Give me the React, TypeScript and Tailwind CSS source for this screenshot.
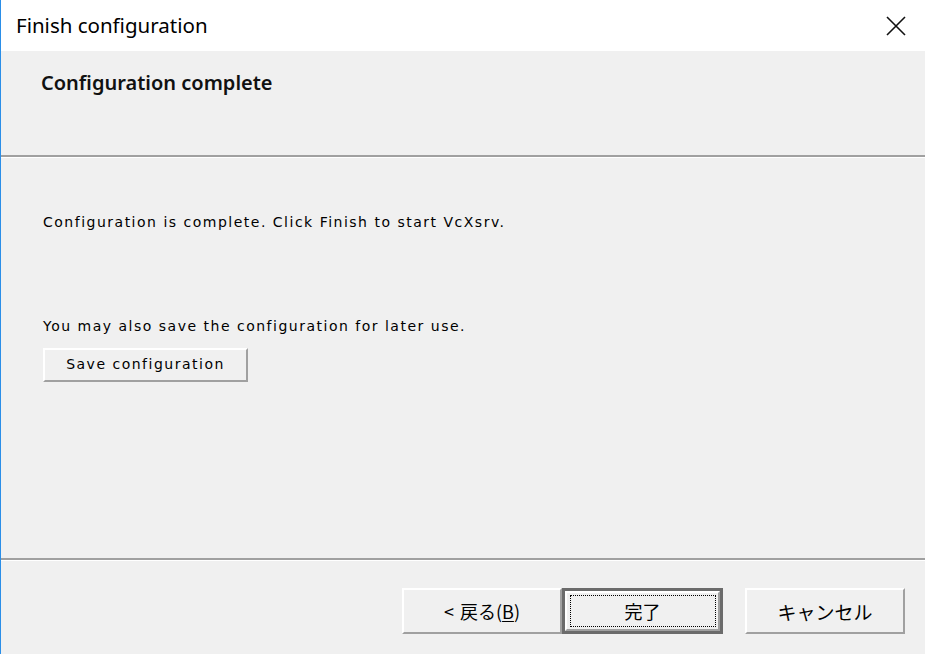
import React from 'react';

const Bevel: React.FC<{ className?: string; children: React.ReactNode }> = ({ className = '', children }) => (
  <div
    className={`flex items-center justify-center border-t-2 border-l-2 border-t-white border-l-white border-b-2 border-r-2 border-b-[#a0a0a0] border-r-[#a0a0a0] bg-[#f0f0f0] ${className}`}
  >
    {children}
  </div>
);

const App: React.FC = () => {
  return (
    <div className="flex h-[654px] w-[925px] flex-col overflow-hidden border-l border-[#2a8ee8] bg-[#f0f0f0] text-black">
      {/* Title bar */}
      <div className="flex h-[51px] shrink-0 items-center justify-between bg-white pl-[15px] pr-[18px]">
        <span className="font-['Noto_Sans',sans-serif] text-[20.5px] leading-none">Finish configuration</span>
        <svg width="22" height="22" viewBox="0 0 22 22" className="mt-px">
          <path d="M2 2 L20 20 M20 2 L2 20" stroke="#111" strokeWidth="1.6" fill="none" />
        </svg>
      </div>

      {/* Header */}
      <div className="flex h-[104px] shrink-0 items-start pl-[40px] pt-[20px]">
        <span className="font-['Noto_Sans',sans-serif] text-[20px] font-semibold leading-[24px] text-[#111]">
          Configuration complete
        </span>
      </div>
      <div className="h-[2px] shrink-0 bg-[#a0a0a0]" />
      <div className="h-px shrink-0 bg-white" />

      {/* Body */}
      <div className="flex h-[400px] shrink-0 flex-col pl-[42px] font-['DejaVu_Sans',sans-serif] text-[14px] tracking-[1.5px]">
        <p className="mt-[55px] leading-[18px]">Configuration is complete. Click Finish to start VcXsrv.</p>
        <p className="mt-[86px] leading-[18px]">You may also save the configuration for later use.</p>
        <Bevel className="mt-[13px] h-[34px] w-[205px] pb-[3px]">
          <span className="leading-none">Save configuration</span>
        </Bevel>
      </div>
      <div className="h-[2px] shrink-0 bg-[#a0a0a0]" />
      <div className="h-px shrink-0 bg-white" />

      {/* Footer buttons */}
      <div className="flex flex-1 items-start pl-[401px] pt-[27px] font-['Noto_Sans_CJK_JP',sans-serif] text-[18px]">
        <Bevel className="h-[46px] w-[160px]">
          <span className="leading-none">
            <span className="mr-[6px]">&lt;</span>戻る(<span className="underline underline-offset-2">B</span>)
          </span>
        </Bevel>
        <div className="h-[46px] w-[161px] border-[3px] border-[#6b6b6b]">
          <Bevel className="h-full w-full">
            <div className="flex h-[32px] w-[146px] items-center justify-center border border-dotted border-black">
              <span className="leading-none">完了</span>
            </div>
          </Bevel>
        </div>
        <Bevel className="ml-[22px] h-[46px] w-[160px]">
          <span className="text-[19px] leading-none">キャンセル</span>
        </Bevel>
      </div>
    </div>
  );
};

export default App;
